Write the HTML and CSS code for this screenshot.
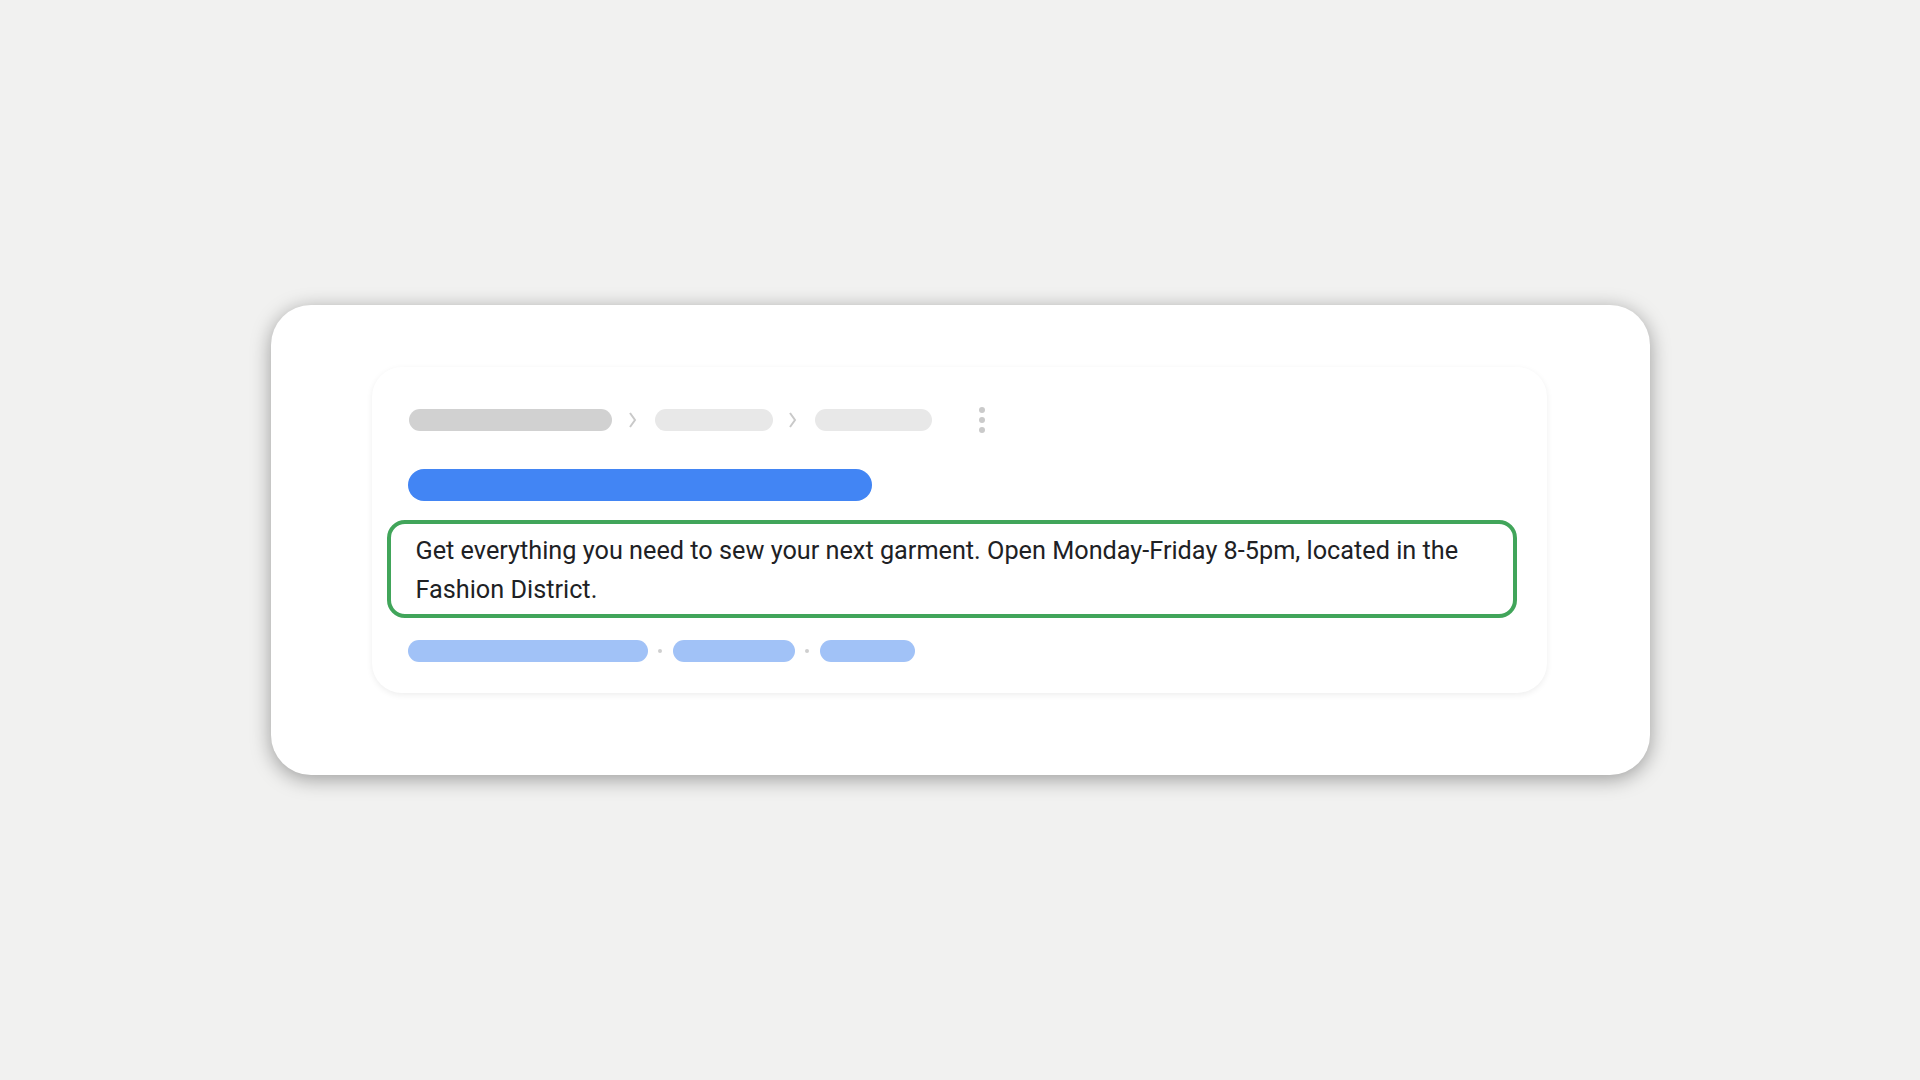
FILE: index.html
```html
<!DOCTYPE html>
<html lang="en">
	<head>
		<meta charset="utf-8">
		<meta name="viewport" content="width=device-width, initial-scale=1">
		<title>Search result description</title>
		<link rel="stylesheet" href="styles.css">
	</head>
	<body>
		<div class="frame">
			<div class="result">
				<div class="crumbs">
					<span class="pill pill-dark w-203"></span>
					<svg class="chevron" width="16" height="22" viewBox="0 0 16 22"><polyline points="5,4 10,11 5,18" fill="none" stroke="#c9c9c9" stroke-width="2"/></svg>
					<span class="pill pill-light w-118"></span>
					<svg class="chevron chevron-2" width="16" height="22" viewBox="0 0 16 22"><polyline points="5,4 10,11 5,18" fill="none" stroke="#c9c9c9" stroke-width="2"/></svg>
					<span class="pill pill-light w-117"></span>
					<span class="more">
						<span class="dot"></span>
						<span class="dot"></span>
						<span class="dot"></span>
					</span>
				</div>
				<div class="title-bar"></div>
				<div class="snippet">
					Get everything you need to sew your next garment. Open Monday-Friday 8-5pm, located in the Fashion District.
				</div>
				<div class="links">
					<span class="pill pill-blue w-240"></span>
					<span class="sep"></span>
					<span class="pill pill-blue w-122"></span>
					<span class="sep"></span>
					<span class="pill pill-blue w-95"></span>
				</div>
			</div>
		</div>
	</body>
</html>
```

FILE: styles.css
```css
body {
	margin: 0;
	min-height: 100vh;
	background-color: #f1f1f0;
	font-family: Roboto, "Liberation Sans", sans-serif;
	display: flex;
	align-items: center;
	justify-content: center;
}

.frame {
	box-sizing: border-box;
	width: 1379px;
	height: 470px;
	padding: 62px 103px 0 101px;
	background-color: #ffffff;
	border-radius: 40px;
	box-shadow: 0 4px 20px rgba(0, 0, 0, 0.36);
}

.result {
	box-sizing: border-box;
	height: 326px;
	padding: 42px 37px 0 37px;
	background-color: #ffffff;
	border-radius: 30px;
	box-shadow: 0 2px 6px rgba(0, 0, 0, 0.07);
}

.crumbs {
	display: flex;
	align-items: center;
	height: 22px;
}

.pill {
	display: block;
	flex-shrink: 0;
	height: 22px;
	border-radius: 11px;
}

.pill-dark {
	background-color: #d1d1d1;
}

.pill-light {
	background-color: #e8e8e8;
}

.pill-blue {
	background-color: #a1c2f7;
}

.w-203 { width: 203px; }
.w-118 { width: 118px; }
.w-117 { width: 117px; }
.w-240 { width: 240px; }
.w-122 { width: 122px; }
.w-95 { width: 95px; }

.chevron {
	display: block;
	flex-shrink: 0;
	margin: 0 14px 0 13px;
}

.chevron-2 {
	margin-left: 12px;
}

.more {
	display: flex;
	flex-direction: column;
	gap: 4px;
	margin-left: 47px;
}

.dot {
	display: block;
	width: 6px;
	height: 6px;
	border-radius: 50%;
	background-color: #cacaca;
}

.title-bar {
	width: 464px;
	height: 32px;
	margin: 38px 0 0 -1px;
	border-radius: 16px;
	background-color: #4285f4;
}

.snippet {
	box-sizing: border-box;
	width: 1130px;
	height: 98px;
	margin: 19px 0 0 -22px;
	padding: 7px 25px 0 25px;
	border: 4px solid #41a55a;
	border-radius: 18px;
	font-size: 25.25px;
	line-height: 39px;
	color: #202124;
}

.links {
	display: flex;
	align-items: center;
	margin: 22px 0 0 -1px;
}

.sep {
	display: block;
	flex-shrink: 0;
	width: 4px;
	height: 4px;
	margin: 0 11px 0 10px;
	border-radius: 50%;
	background-color: #cfcfcf;
}
```
